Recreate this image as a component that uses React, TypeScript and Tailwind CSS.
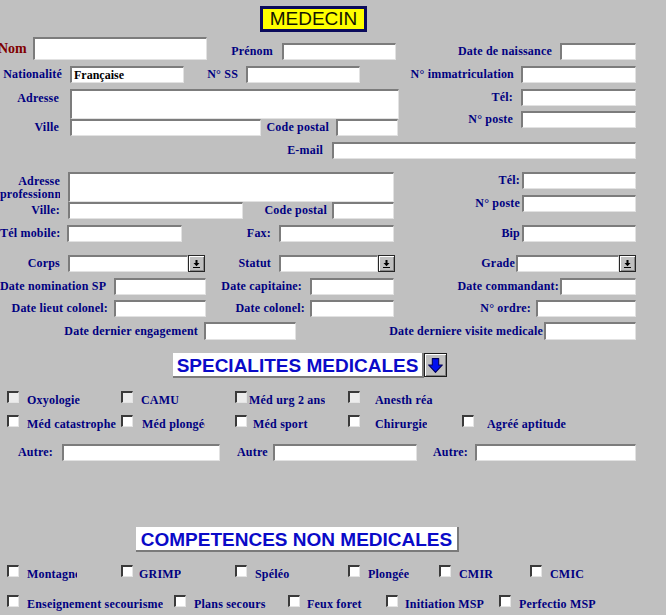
import React from "react";
import { twMerge } from "tailwind-merge";

const LBL =
  "font-bold text-[12px] tracking-[0.2px] text-[#000080] whitespace-nowrap leading-[17px] shrink-0";

function Inp({
  className = "",
  children,
}: {
  className?: string;
  children?: React.ReactNode;
}) {
  return (
    <div
      className={twMerge(
        "h-[17px] shrink-0 bg-white border-t-2 border-l-2 border-b border-r border-t-[#7c7c7c] border-l-[#7c7c7c] border-b-[#e2e2e2] border-r-[#e2e2e2]",
        className
      )}
    >
      {children}
    </div>
  );
}

function Lb({
  className = "",
  children,
}: {
  className?: string;
  children?: React.ReactNode;
}) {
  return <span className={twMerge(LBL, "text-right", className)}>{children}</span>;
}

function Sel({ className = "" }: { className?: string }) {
  return (
    <div className={twMerge("flex h-[17px] shrink-0", className)}>
      <Inp className="flex-1 h-[17px]" />
      <div className="w-[17px] h-[17px] shrink-0 bg-[#c0c0c0] border border-[#262626] shadow-[inset_1px_1px_0_#ffffff,inset_-1px_-1px_0_#8a8a8a] flex items-center justify-center">
        <svg width="9" height="10" viewBox="0 0 9 10">
          <path d="M3.5 1h2v3h2l-3 3.2-3-3.2h2z" fill="#000" />
          <rect x="1" y="8" width="7" height="1" fill="#000" />
        </svg>
      </div>
    </div>
  );
}

function Box({ gray = false }: { gray?: boolean }) {
  return (
    <div
      className={twMerge(
        "w-[12px] h-[12px] shrink-0 bg-white border-t-2 border-l-2 border-b border-r border-t-[#3a3a3a] border-l-[#3a3a3a] border-b-[#e4e4e4] border-r-[#e4e4e4]",
        gray ? "bg-[#ececec]" : ""
      )}
    />
  );
}

function Chk({
  cell = "",
  gap,
  label,
  lw = "",
  gray = false,
}: {
  cell?: string;
  gap: string;
  label: string;
  lw?: string;
  gray?: boolean;
}) {
  return (
    <div className={twMerge("flex items-start shrink-0 h-[16px]", cell)}>
      <Box gray={gray} />
      <span
        className={twMerge(
          "font-bold text-[12px] tracking-[0.2px] text-[#000080] whitespace-nowrap leading-[14px] mt-[2px] overflow-hidden shrink-0",
          gap,
          lw
        )}
      >
        {label}
      </span>
    </div>
  );
}

function ArrowBtn() {
  return (
    <div className="w-[23px] h-[24px] shrink-0 bg-[#c0c0c0] border border-[#1c1c1c] shadow-[inset_1px_1px_0_#ffffff,inset_-1px_-1px_0_#808080] flex items-center justify-center">
      <svg width="17" height="17" viewBox="0 0 16 16">
        <path
          d="M5 1.5h6v6h3.5L8 14.5 1.5 7.5H5z"
          fill="#0010f0"
          stroke="#00005a"
          strokeWidth="1"
          strokeLinejoin="round"
        />
      </svg>
    </div>
  );
}

function Header({ className, children }: { className: string; children: React.ReactNode }) {
  return (
    <div
      className={twMerge(
        "h-[25px] shrink-0 pt-[2px] bg-white border-b-2 border-r-2 border-b-[#7a7a7a] border-r-[#7a7a7a] flex items-center justify-center font-['Liberation_Sans',Arial,sans-serif] font-bold text-[19px] leading-[22px] text-[#0a0ac8] whitespace-nowrap",
        className
      )}
    >
      {children}
    </div>
  );
}

export default function App() {
  return (
    <div className="w-[666px] h-[615px] overflow-hidden bg-[#c0c0c0] font-['Liberation_Serif','Times_New_Roman',serif]">
      {/* Title */}
      <div className="flex pt-[6px]">
        <div className="ml-[260px] w-[107px] h-[26px] bg-[#ffff00] border-[3px] border-[#0c0c5c] flex items-center justify-center font-['Liberation_Sans',Arial,sans-serif] text-[19px] leading-[20px] text-[#151500]">
          MEDECIN
        </div>
      </div>

      {/* Nom row */}
      <div className="flex items-end mt-[5px] h-[23px]">
        <span className="-ml-[2px] w-[31px] shrink-0 font-bold text-[14px] text-[#800000] leading-[23px] whitespace-nowrap">
          Nom
        </span>
        <Inp className="ml-[4px] w-[174px] h-[23px]" />
        <Lb className="w-[66px]">Prénom</Lb>
        <Inp className="ml-[9px] w-[114px]" />
        <Lb className="w-[156px]">Date de naissance</Lb>
        <Inp className="ml-[8px] w-[76px]" />
      </div>

      {/* Nationalité row */}
      <div className="flex items-center mt-[6px]">
        <Lb className="w-[62px]">Nationalité</Lb>
        <Inp className="ml-[8px] w-[114px] pl-[2px] font-bold text-[12px] leading-[14px] text-black">
          Française
        </Inp>
        <Lb className="w-[54px]">N° SS</Lb>
        <Inp className="ml-[8px] w-[114px]" />
        <Lb className="w-[154px]">N° immatriculation</Lb>
        <Inp className="ml-[7px] w-[115px]" />
      </div>

      {/* Adresse block */}
      <div className="flex mt-[6px]">
        <div className="w-[400px] shrink-0">
          <div className="flex">
            <Lb className="w-[59px] leading-[14px] pt-[2px]">Adresse</Lb>
            <Inp className="ml-[11px] w-[329px] h-[30px]" />
          </div>
          <div className="flex items-center">
            <Lb className="w-[59px]">Ville</Lb>
            <Inp className="ml-[11px] w-[191px]" />
            <Lb className="w-[68px]">Code postal</Lb>
            <Inp className="ml-[7px] w-[62px]" />
          </div>
        </div>
        <div className="flex flex-col">
          <div className="flex items-center">
            <Lb className="w-[113px]">Tél:</Lb>
            <Inp className="ml-[8px] w-[115px]" />
          </div>
          <div className="flex items-center mt-[5px]">
            <Lb className="w-[113px]">N° poste</Lb>
            <Inp className="ml-[8px] w-[115px]" />
          </div>
        </div>
      </div>

      {/* E-mail */}
      <div className="flex items-center mt-[6px]">
        <Lb className="w-[323px]">E-mail</Lb>
        <Inp className="ml-[9px] w-[304px]" />
      </div>

      {/* Adresse professionnelle block */}
      <div className="flex mt-[13px]">
        <div className="w-[400px] shrink-0">
          <div className="flex">
            <div className="w-[60px] shrink-0 pt-[3px] font-bold text-[12px] tracking-[0.2px] text-[#000080] leading-[13px]">
              <div className="text-right whitespace-nowrap">Adresse</div>
              <div className="whitespace-nowrap overflow-hidden">professionnelle</div>
            </div>
            <Inp className="ml-[8px] w-[326px] h-[30px]" />
          </div>
          <div className="flex items-center">
            <Lb className="w-[60px]">Ville:</Lb>
            <Inp className="ml-[8px] w-[175px]" />
            <Lb className="w-[84px]">Code postal</Lb>
            <Inp className="ml-[5px] w-[62px]" />
          </div>
        </div>
        <div className="flex flex-col">
          <div className="flex items-center">
            <Lb className="w-[120px]">Tél:</Lb>
            <Inp className="ml-[2px] w-[114px]" />
          </div>
          <div className="flex items-center mt-[6px]">
            <Lb className="w-[120px]">N° poste</Lb>
            <Inp className="ml-[2px] w-[114px]" />
          </div>
        </div>
      </div>

      {/* Tél mobile row */}
      <div className="flex items-center mt-[6px]">
        <Lb className="w-[60px]">Tél mobile:</Lb>
        <Inp className="ml-[7px] w-[115px]" />
        <Lb className="w-[89px]">Fax:</Lb>
        <Inp className="ml-[8px] w-[115px]" />
        <Lb className="w-[126px]">Bip</Lb>
        <Inp className="ml-[2px] w-[114px]" />
      </div>

      {/* Corps row */}
      <div className="flex items-center mt-[13px]">
        <Lb className="w-[60px]">Corps</Lb>
        <Sel className="ml-[8px] w-[137px]" />
        <Lb className="w-[66px]">Statut</Lb>
        <Sel className="ml-[8px] w-[116px]" />
        <Lb className="w-[120px]">Grade</Lb>
        <Sel className="ml-[1px] w-[120px]" />
      </div>

      {/* Dates row 1 */}
      <div className="flex items-center mt-[6px]">
        <Lb className="w-[106px]">Date nomination SP</Lb>
        <Inp className="ml-[8px] w-[92px]" />
        <Lb className="w-[96px]">Date capitaine:</Lb>
        <Inp className="ml-[8px] w-[84px]" />
        <Lb className="w-[165px]">Date commandant:</Lb>
        <Inp className="ml-[1px] w-[76px]" />
      </div>

      {/* Dates row 2 */}
      <div className="flex items-center mt-[5px]">
        <Lb className="w-[108px]">Date lieut colonel:</Lb>
        <Inp className="ml-[6px] w-[92px]" />
        <Lb className="w-[99px]">Date colonel:</Lb>
        <Inp className="ml-[5px] w-[84px]" />
        <Lb className="w-[137px]">N° ordre:</Lb>
        <Inp className="ml-[5px] w-[100px]" />
      </div>

      {/* Dates row 3 */}
      <div className="flex items-center mt-[5px]">
        <Lb className="w-[198px]">Date dernier engagement</Lb>
        <Inp className="ml-[6px] w-[92px] h-[18px]" />
        <Lb className="w-[247px]">Date derniere visite medicale</Lb>
        <Inp className="ml-[1px] w-[92px] h-[18px]" />
      </div>

      {/* SPECIALITES MEDICALES */}
      <div className="flex items-start mt-[13px] ml-[173px]">
        <Header className="w-[251px]">SPECIALITES MEDICALES</Header>
        <ArrowBtn />
      </div>

      <div className="flex mt-[13px] pl-[7px]">
        <Chk cell="w-[114px]" gap="ml-[8px]" label="Oxyologie" gray />
        <Chk cell="w-[114px]" gap="ml-[8px]" label="CAMU" gray />
        <Chk cell="w-[113px]" gap="ml-[2px]" label="Méd urg 2 ans" gray />
        <Chk gap="ml-[15px]" label="Anesth réa" gray />
      </div>
      <div className="flex mt-[8px] pl-[7px]">
        <Chk cell="w-[114px]" gap="ml-[8px]" label="Méd catastrophe" />
        <Chk cell="w-[114px]" gap="ml-[9px]" label="Méd plongée" lw="w-[63px]" />
        <Chk cell="w-[113px]" gap="ml-[6px]" label="Méd sport" />
        <Chk cell="w-[114px]" gap="ml-[15px]" label="Chirurgie" />
        <Chk gap="ml-[13px]" label="Agréé aptitude" />
      </div>

      {/* Autre row */}
      <div className="flex items-center mt-[13px]">
        <span className={twMerge(LBL, "ml-[18px] w-[44px]")}>Autre:</span>
        <Inp className="w-[158px]" />
        <span className={twMerge(LBL, "ml-[17px] w-[36px]")}>Autre</span>
        <Inp className="w-[144px]" />
        <span className={twMerge(LBL, "ml-[16px] w-[42px]")}>Autre:</span>
        <Inp className="w-[161px]" />
      </div>

      {/* COMPETENCES NON MEDICALES */}
      <div className="flex mt-[66px] ml-[136px]">
        <Header className="w-[323px]">COMPETENCES NON MEDICALES</Header>
      </div>

      <div className="flex mt-[13px] pl-[7px]">
        <Chk cell="w-[114px]" gap="ml-[8px]" label="Montagne" lw="w-[50px]" />
        <Chk cell="w-[114px]" gap="ml-[6px]" label="GRIMP" />
        <Chk cell="w-[113px]" gap="ml-[8px]" label="Spéléo" />
        <Chk cell="w-[91px]" gap="ml-[8px]" label="Plongée" />
        <Chk cell="w-[91px]" gap="ml-[8px]" label="CMIR" />
        <Chk gap="ml-[8px]" label="CMIC" />
      </div>
      <div className="flex mt-[14px] pl-[7px]">
        <Chk cell="w-[167px]" gap="ml-[8px]" label="Enseignement secourisme" />
        <Chk cell="w-[114px]" gap="ml-[8px]" label="Plans secours" />
        <Chk cell="w-[98px]" gap="ml-[7px]" label="Feux foret" />
        <Chk cell="w-[113px]" gap="ml-[7px]" label="Initiation MSP" />
        <Chk gap="ml-[8px]" label="Perfectio MSP" />
      </div>
    </div>
  );
}
